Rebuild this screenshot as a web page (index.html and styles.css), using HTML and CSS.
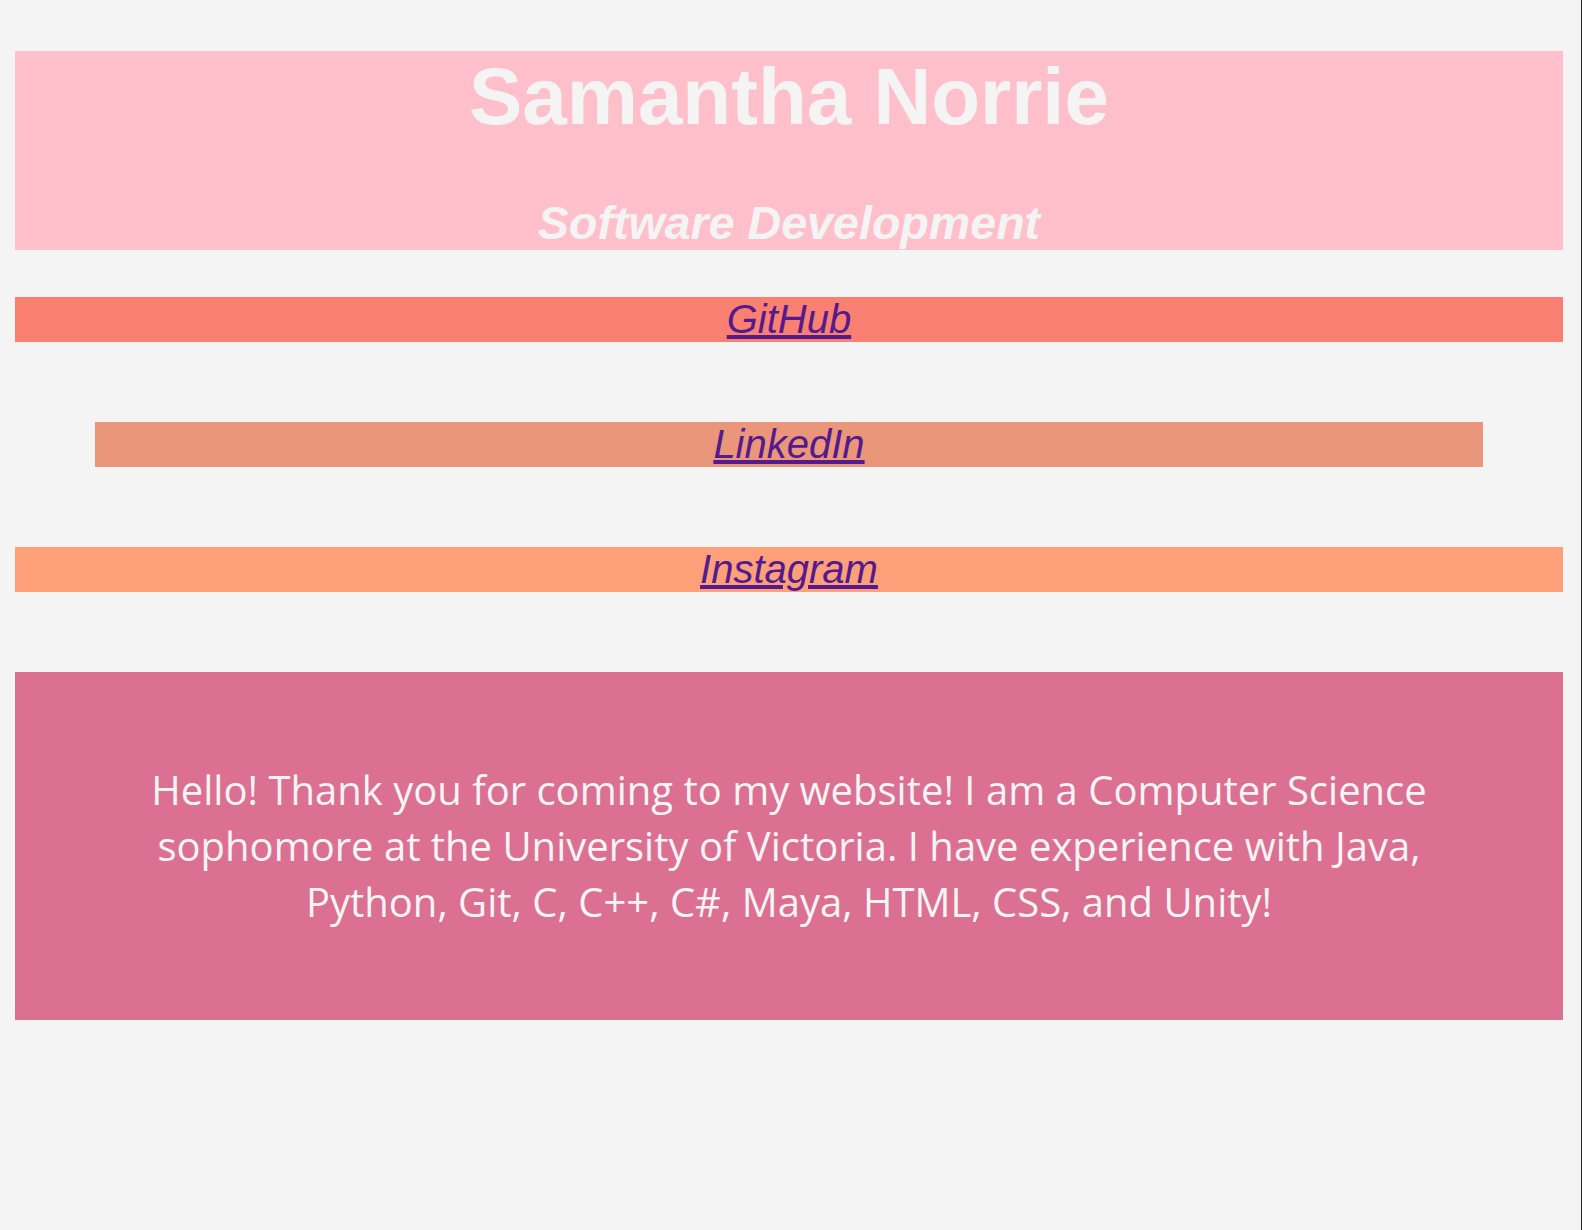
FILE: index.html
```html
<!DOCTYPE html>
<html lang="en">
<head>
<meta charset="utf-8">
<title>Samantha Norrie</title>
<link rel="stylesheet" href="styles.css">
</head>
<body>
  <header class="header">
    <h1 class="header__name">Samantha Norrie</h1>
    <h2 class="header__role">Software Development</h2>
  </header>
  <nav class="links">
    <div class="link-bar link-bar--github"><a class="link-bar__link" href="#github">GitHub</a></div>
    <div class="link-bar link-bar--linkedin"><a class="link-bar__link" href="#linkedin">LinkedIn</a></div>
    <div class="link-bar link-bar--instagram"><a class="link-bar__link" href="#instagram">Instagram</a></div>
  </nav>
  <section class="bio">
    <p class="bio__text">Hello! Thank you for coming to my website! I am a Computer Science sophomore at the University of Victoria. I have experience with Java, Python, Git, C, C++, C#, Maya, HTML, CSS, and Unity!</p>
  </section>
</body>
</html>
```
FILE: styles.css
```css
html {
  min-height: 100%;
  background: #f4f4f4;
  box-shadow: inset -1px 0 0 #262626;
}

body {
  margin: 0;
  padding: 51px 19px 0 15px;
  font-family: "Liberation Sans", Arial, sans-serif;
}

.header {
  background: #ffc0cb;
  color: #f4f4f4;
  text-align: center;
  height: 199px;
}

.header__name {
  margin: 0;
  font-size: 80px;
  line-height: 92px;
  font-weight: bold;
}

.header__role {
  margin: 53px 0 0;
  font-size: 46.6px;
  line-height: 54px;
  font-weight: bold;
  font-style: italic;
}

.links {
  margin-top: 47px;
  display: flex;
  flex-direction: column;
  gap: 80px;
}

.link-bar {
  height: 45px;
  line-height: 45px;
  font-size: 40px;
  font-style: italic;
  text-align: center;
}

.link-bar--github { background: #fa8072; }
.link-bar--linkedin { background: #e9967a; margin: 0 80px; }
.link-bar--instagram { background: #ffa07a; }

.link-bar__link {
  color: #551a8b;
}

.bio {
  margin-top: 80px;
  background: #db7093;
  padding: 90px 114px;
  text-align: center;
}

.bio__text {
  margin: 0;
  color: #f4f4f4;
  font-family: "Comic Sans MS", "Open Sans", sans-serif;
  font-size: 40px;
  line-height: 56px;
}
```
